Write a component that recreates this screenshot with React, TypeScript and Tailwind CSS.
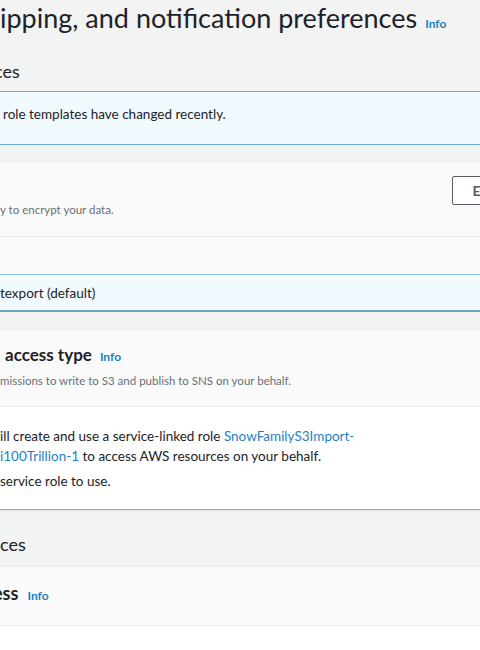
const InfoLink = ({ className = "" }: { className?: string }) => (
  <span className={`text-[12px] font-bold text-[#1f7fc4] ${className}`}>Info</span>
);

export default function App() {
  return (
    <div className="h-[650px] w-[480px] overflow-hidden bg-[#f2f3f3] font-['Lato',sans-serif] text-[#1d2228]">
      <h1 className="flex items-baseline gap-[8px] whitespace-nowrap text-[27px] leading-[36px] font-normal">
        <span>ipping, and notification preferences</span>
        <InfoLink />
      </h1>

      <h2 className="mt-[17px] -ml-[6px] text-[18px] leading-[24px]">ces</h2>

      <div className="mt-[8px] border-y border-[#6aa8d6] bg-[#f1faff] pt-[12px] pb-[20px] pl-[3px] text-[13.5px] leading-[20px]">
        role templates have changed recently.
      </div>

      <section className="mt-[16px] border-t border-[#eaeded] bg-[#fafafa]">
        <div className="flex items-start justify-between pt-[14px] pb-[18px]">
          <p className="mt-[26px] text-[11.5px] leading-[16px] text-[#687078]">
            y to encrypt your data.
          </p>
          <button className="-mr-[38px] h-[29px] rounded-[2px] border border-[#545b64] bg-white pl-[19px] pr-[20px] text-[14px] font-bold text-[#545b64]">
            Edit
          </button>
        </div>
        <div className="border-t border-[#eaeded] pt-[37px]">
          <div className="border-t border-b-2 border-t-[#8cc8dc] border-b-[#6fa3c1] bg-[#f1faff] pt-[8px] pb-[7px] text-[13.5px] leading-[20px]">
            texport (default)
          </div>
        </div>
      </section>

      <section className="mt-[19px] bg-white shadow-[0_1px_1px_0_rgba(0,28,36,0.35)]">
        <div className="border-b border-[#eaeded] bg-[#fafafa] pt-[12px] pb-[17px]">
          <div className="flex items-baseline gap-[8px] pl-[5px]">
            <span className="text-[17px] leading-[24px] font-bold">access type</span>
            <InfoLink />
          </div>
          <p className="mt-[6px] text-[11.5px] leading-[16px] text-[#687078]">
            missions to write to S3 and publish to SNS on your behalf.
          </p>
        </div>
        <div className="pt-[19px] pb-[18px] text-[13.5px] leading-[20px]">
          <p>
            ill create and use a service-linked role{" "}
            <span className="text-[#1f7fc4]">SnowFamilyS3Import-</span>
          </p>
          <p>
            <span className="text-[#1f7fc4]">i100Trillion-1</span> to access AWS resources on your behalf.
          </p>
          <p className="mt-[5px]">service role to use.</p>
        </div>
      </section>

      <h2 className="mt-[23px] -ml-[10px] text-[18px] leading-[24px]">nces</h2>

      <section className="mt-[10px] bg-white">
        <div className="border-y border-[#eaeded] bg-[#fafafa] pt-[14px] pb-[20px]">
          <div className="-ml-[7px] flex items-baseline gap-[9px]">
            <span className="text-[18px] leading-[24px] font-bold">ess</span>
            <InfoLink />
          </div>
        </div>
        <div className="h-[40px]" />
      </section>
    </div>
  );
}
